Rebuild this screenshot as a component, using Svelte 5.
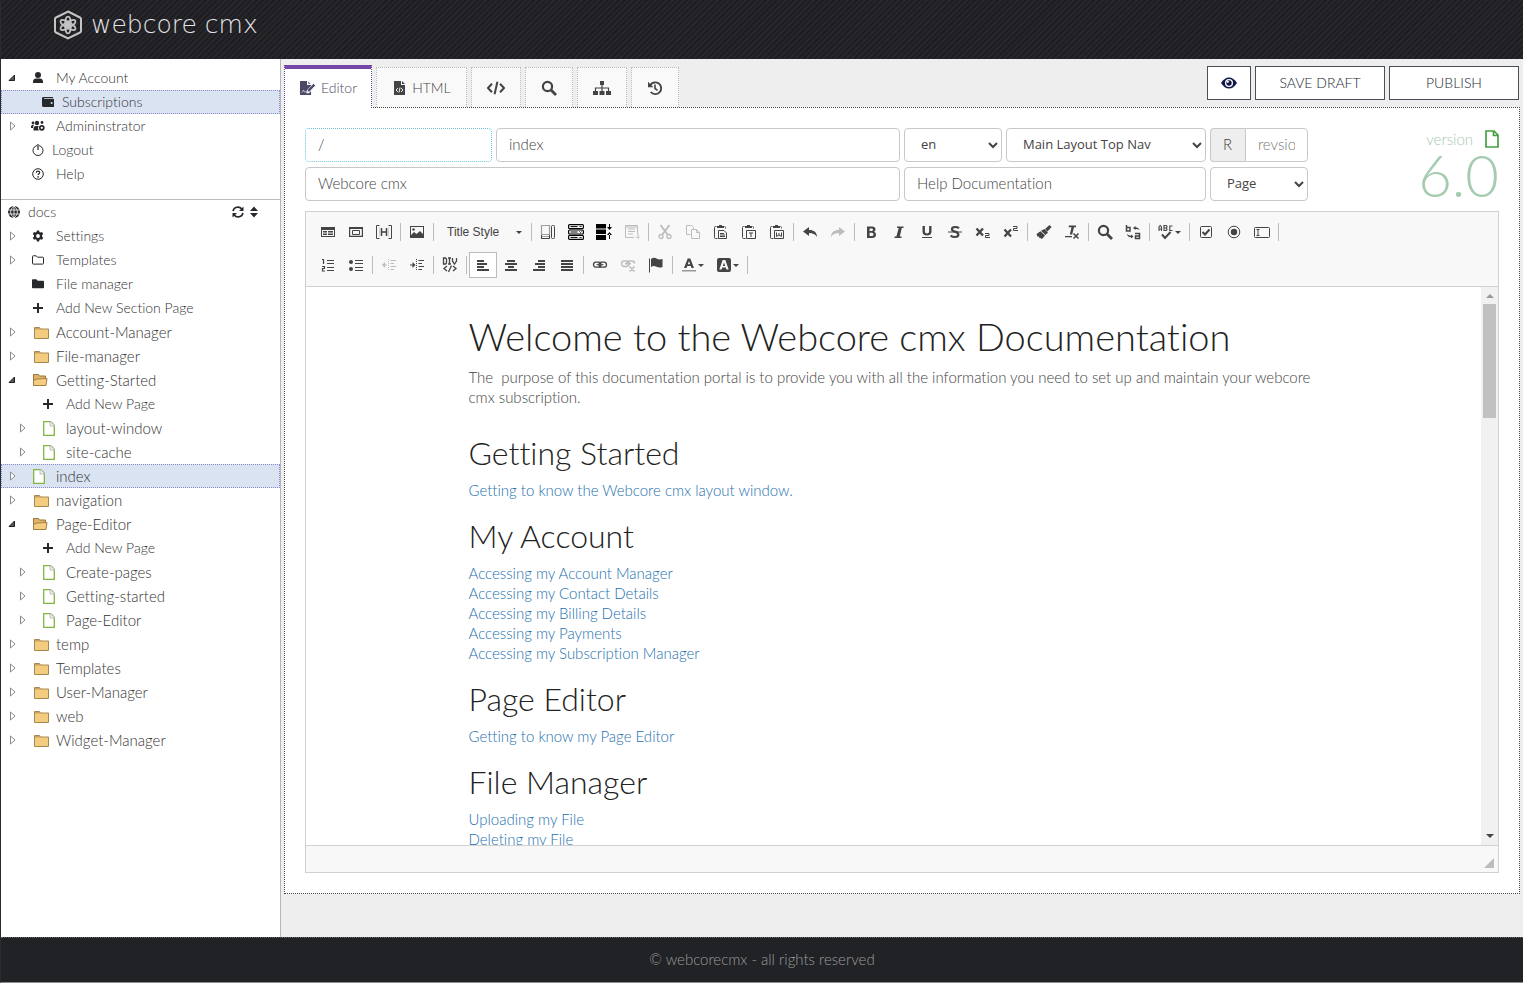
<script>
  const icons = {
    user: '<circle cx="10" cy="5" r="3"/><path d="M5 13v-1.500C5 9.500 6.500 8.500 8 8.500h4c1.500 0 3 1 3 3V13z"/>',
    wallet: '<path d="M5 3h10v1H6v.8h9.500q.5 0 .5.500v7.200q0 .5-.5.500H5.500Q4 13 4 11.500v-7Q4 3 5 3z"/><circle cx="13.600" cy="9" r="1" fill="#d9e3f2"/>',
    users: '<circle cx="9" cy="5" r="2.200"/><circle cx="5" cy="5" r="1.400"/><circle cx="14" cy="4.500" r="1.400"/><path d="M3 10V8.500Q3 7 4.500 7H6q-1 1-1 3zM5.500 12.500V11Q5.500 8 8 8h2.500L10 10.500l1 2z"/><circle cx="13.800" cy="9.800" r="2" fill="none" stroke="currentColor" stroke-width="1.700"/>',
    power: '<circle cx="10" cy="8.500" r="5" fill="none" stroke="currentColor"/><path d="M9 2h2v7H9z" fill="#fff"/><path d="M9.400 2h1.200v6H9.400z"/>',
    help: '<circle cx="10" cy="8" r="5.300" fill="none" stroke="currentColor"/><path d="M8.300 6.700C8.300 4.600 11.800 4.700 11.700 6.700 11.600 7.800 10.100 7.900 10.100 9.100" fill="none" stroke="currentColor" stroke-width="1.200"/><circle cx="10.100" cy="10.900" r=".8"/>',
    globe: '<circle cx="10" cy="8" r="6"/><path d="M4 6h12M4 10h12M10 2v12M10 2C5.500 6 5.500 10 10 14M10 2c4.500 4 4.500 8 0 12" fill="none" stroke="#fff" stroke-width=".8"/>',
    gear: '<path d="M8.900 2.500h2.200l.4 1.500 1 .6 1.500-.5 1.200 2-1.200 1.100v1.400l1.200 1.100-1.200 2-1.500-.5-1 .6-.4 1.600H8.900l-.4-1.600-1-.6-1.500.5-1.200-2L6 8.600V7.200L4.800 6.100l1.200-2 1.500.5 1-.6z"/><circle cx="10" cy="8" r="1.900" fill="#fff"/>',
    folderLine: '<path d="M4.500 4.500q0-.7.700-.7h3l1.300 1.400h5.200q.8 0 .8.800v5.300q0 .8-.8.800H5.300q-.8 0-.8-.8z" fill="none" stroke="currentColor"/>',
    folderSolid: '<path d="M4 4q0-.8.800-.8h3.500L9.700 4.700h5.500q.8 0 .8.800v6q0 .8-.8.800H4.800q-.8 0-.8-.8z"/>',
    plus: '<path d="M9 3h2v4h4v2h-4v4H9V9H5V7h4z"/>',
    folder: '<path d="M6.500 4V3.500h5l1 1.500H20.500v9.500h-14z" fill="#f4cc7f" stroke="#a98850"/><path d="M7 4h4.500l1 1.500H7z" fill="#c9a35f"/>',
    folderOpen: '<path d="M5.500 13.500v-11h5l1 1.500h6v3" fill="#e0b366" stroke="#96723a"/><path d="M5.500 13.500V8.500L9 7l10 -.5-1 7z" fill="#f6cd80" stroke="#a47e43"/>',
    page: '<path d="M5.700 1.700h7l3.600 3.600v10H5.700z" fill="#fff" stroke="#7fb741" stroke-width="1.300"/><path d="M12 1l5 5h-5z" fill="#eee" stroke="#aaa" stroke-width=".7"/>',
    editor: '<path d="M1 1h7v4h4v1.500L7.500 11v2.200H10L12 11v4H1z"/><path d="M9 1l3 3H9zM14.500 3.500L16.500 5.500 10.500 11.800H8.500V9.800zM3 12.500l1.500-2.500 1 2h2" stroke="#fff" stroke-width=".6"/>',
    htmlFile: '<path d="M2 1h7v4h4v10H2z"/><path d="M10 1l3 3h-3z"/><path d="M6 8l-2 2 2 2M9 8l2 2-2 2M8 7.500l-1 5" fill="none" stroke="#fff" stroke-width=".9"/>',
    code: '<path d="M5 3.800L1 8l4 4.200M13 3.800L17 8l-4 4.200M10.400 1.800L7.600 14.200" fill="none" stroke="currentColor" stroke-width="2"/>',
    search: '<circle cx="6.500" cy="6.500" r="4.600" fill="none" stroke="currentColor" stroke-width="2.200"/><path d="M10 10l5 5" stroke="currentColor" stroke-width="2.800"/>',
    sitemap: '<path d="M7 1h4v4H7zM0 11h5v4H0zM6.500 11h5v4h-5zM13 11h5v4h-5z"/><path d="M9 5v6M2.500 11V8h13v3" fill="none" stroke="currentColor" stroke-width="1.200"/>',
    history: '<path d="M3.200 5.200A5.900 5.900 0 1 1 3.700 12" fill="none" stroke="currentColor" stroke-width="1.900"/><path d="M1 1.800v5.400h5.400z"/><path d="M8 4.500V8.500l2.500 1.800" fill="none" stroke="currentColor" stroke-width="1.600"/>',
    eye: '<path d="M1 8Q4.500 2.500 9 2.500T17 8Q13.500 13.500 9 13.500T1 8z"/><circle cx="9" cy="8" r="4" fill="#fff"/><circle cx="9" cy="8" r="2.700"/><circle cx="7.800" cy="6.800" r="1.100" fill="#fff"/>',
    form: '<path d="M1 3h14v10H1zm1 3v6h12V6z" fill-rule="evenodd"/><path d="M3 7h4v1.500H3zM8 7h5v1.500H8zM3 9.500h4V11H3zM8 9.500h5V11H8z"/>',
    iframe: '<path d="M1 3h14v10H1zm1.200 2v6.800h11.600V5z" fill-rule="evenodd"/><path d="M4.500 6.500h7v4h-7z" fill="none" stroke="currentColor"/>',
    hidden: '<path d="M3.500 1.500h-3v13h3M12.500 1.500h3v13h-3" fill="none" stroke="currentColor"/><path d="M5.500 4v8M10.500 4v8M5.500 8h5" fill="none" stroke="currentColor" stroke-width="1.500"/><path d="M3.500 3v10M12.500 3v10" stroke="#bbb" stroke-width=".6"/>',
    image: '<path d="M1 2h14v12H1zm1 1v8l3-3 2.500 2L11 7l3 3V3z" fill-rule="evenodd"/><circle cx="4.500" cy="5.500" r="1.200"/>',
    layout: '<path d="M1.500 1.500h8v9h-8zM1.500 12.500h8v2h-8z" fill="none" stroke="currentColor" stroke-width="1.200" stroke-dasharray="1 1"/><path d="M1.500 11v3.500h8V11" fill="none" stroke="currentColor"/><rect x="11.500" y="1.500" width="3" height="13" rx="1" fill="none" stroke="currentColor"/>',
    rows: '<rect x=".6" y=".6" width="14.800" height="4" rx="1" fill="#fff" stroke="#000" stroke-width="1.200"/><rect x=".6" y="6" width="14.800" height="4" rx="1" fill="#fff" stroke="#000" stroke-width="1.200"/><rect x=".6" y="11.400" width="14.800" height="4" rx="1" fill="#fff" stroke="#000" stroke-width="1.200"/><path d="M2.500 2.600h7M2.500 8h7M2.500 13.400h7M11.500 2l1 1 1-1M11.500 7.500l1 1 1-1M11.500 13l1 1 1-1" fill="none" stroke="#000"/>',
    rowHeight: '<path d="M0 0h10v4.500H0zM0 5.500h10V10H0zM0 11h10v5H0zM11 3h5l-2.500 3zM11 11h5l-2.500-3zM13 0h1v4h-1zM13 10h1v5h-1z" fill="#000"/>',
    template: '<path d="M10 13.500H1.500v-12h12V9M4 5h7M4 7.500h7M4 10h5M1.500 3h12" fill="none" stroke="currentColor"/><path d="M14 9v5M12 12.500l2 2 2-2" fill="none" stroke="currentColor"/>',
    cut: '<path d="M3.500 1l7.500 10M12.500 1L5 11" stroke="currentColor" stroke-width="1.800"/><circle cx="4" cy="12.500" r="2" fill="none" stroke="currentColor" stroke-width="1.300"/><circle cx="12" cy="12.500" r="2" fill="none" stroke="currentColor" stroke-width="1.300"/>',
    copy: '<path d="M5.500 10.500h-4v-9h5l2 2v2M6.500 5.500h5l3 3v6h-8zM11.500 5.500v3h3" fill="none" stroke="currentColor"/>',
    paste: '<path d="M4.500 14.500h-2q-1 0-1-1v-10q0-1 1-1h1M11.500 2.500q1 0 1 1v1M5.500 6.500h5.500l2.500 2.500v5.500h-8zM7 9.500h4M7 11h5M7 12.500h5" fill="none" stroke="currentColor"/><path d="M4 2h2V1h3v1h2v2H4z"/>',
    pasteText: '<path d="M4.500 14.500h-2q-1 0-1-1v-10q0-1 1-1h1M11.500 2.500q1 0 1 1v1M5.500 6.500h9v8h-9zM8 9h4M10 9v4" fill="none" stroke="currentColor"/><path d="M4 2h2V1h3v1h2v2H4z"/>',
    pasteWord: '<path d="M4.500 14.500h-2q-1 0-1-1v-10q0-1 1-1h1M11.500 2.500q1 0 1 1v1M5.500 6.500h9v8h-9zM7.500 8.500v4l2.500-1.500 2.500 1.500v-4M10 9v2" fill="none" stroke="currentColor"/><path d="M4 2h2V1h3v1h2v2H4z"/>',
    undo: '<path d="M1 7.500L7 3v3c5 0 8 2.500 8 7-2-3-4-4-8-4v3z"/>',
    redo: '<path d="M15 7.500L9 3v3C4 6 1 8.500 1 13c2-3 4-4 8-4v3z"/>',
    bold: '<path d="M4 2.500h5q3.500 0 3.500 3 0 1.600-1.400 2.300Q13 8.500 13 10.500 13 14 9 14H4zm2.600 2v2.500h1.900q1.500 0 1.500-1.300T8.500 4.500zm0 4.300V12h2.200q1.700 0 1.700-1.600T8.800 8.800z" fill-rule="evenodd"/>',
    italic: '<path d="M6 2.500h6.500v1.500h-1.700L8.800 12.500h1.700V14H3.500v-1.500h1.900L7.700 4H6z"/>',
    underline: '<path d="M3.500 2v5.500q0 4 4.500 4t4.500-4V2h-2.400v5.500q0 2-2.100 2t-2.100-2V2zM3 13h10v1H3z"/>',
    strike: '<path d="M12 4.200Q10.500 3 8 3 5 3 5 5.200 5 7 8 7.600t3.400 3Q11.400 13 8 13 5.500 13 3.600 11.600" fill="none" stroke="currentColor" stroke-width="2.200"/><path d="M1 7.500h14v1H1z"/>',
    sub: '<path d="M1.500 4.500l6.500 7M8 4.500l-6.500 7" stroke="currentColor" stroke-width="2.300"/><path d="M10 9.500h4v2h-3.500v2H15" fill="none" stroke="currentColor"/>',
    sup: '<path d="M1.500 5.500l6.500 7M8 5.500l-6.500 7" stroke="currentColor" stroke-width="2.300"/><path d="M10 2.500h4v2h-3.500v2H15" fill="none" stroke="currentColor"/>',
    brush: '<path d="M13.500 1l2 2-4 4.500L9 5z"/><path d="M8.500 5l3.500 3.500L9.500 11 5 6.800zM4.500 7.300l4.500 4.200L6 15l-1.500-1-1 .2L3 12.500l-1.500.3L.500 10z"/>',
    clear: '<path d="M5 1.500h7v1.700H10L8.200 10.500h-2.400L7.500 3.200H4.500zM1 12h7v1.300H1z"/><path d="M9.500 9.500l5 5M14.500 9.500l-5 5" stroke="currentColor" stroke-width="1.500"/>',
    replace: '<path d="M1.500 1v6h3.500V3.500H1.500M10 9.500h4.500v5H10.500v-2.500h4" fill="none" stroke="currentColor" stroke-width="1.500"/><path d="M8 4l2.500-2v1.200q3 0 4 3-2-1.500-4-1.300V6zM8.500 12.500L6 10.500v1.200q-2.500 0-4-2 .5 3.500 4 3.500v1.300z"/>',
    spell: '<path d="M1 7V3L2.200 1.500 3.500 3V7M1 5h2.500M6 7V1.500h2.300l.8 1-.8 1.500.8 1.500L8.300 6.500H6M6 4h2M14.500 2h-2.700v4.500h2.700" fill="none" stroke="currentColor" stroke-width="1.100"/><path d="M4 10.500l3 3.500 5.500-6" fill="none" stroke="currentColor" stroke-width="2"/>',
    checkbox: '<rect x="2.500" y="2.500" width="11" height="11" rx="1" fill="none" stroke="currentColor"/><path d="M4.500 8l2.500 2.500L11.500 5.500" fill="none" stroke="currentColor" stroke-width="2"/>',
    radio: '<circle cx="8" cy="8" r="5.800" fill="none" stroke="currentColor"/><circle cx="8" cy="8" r="3.200"/>',
    textfield: '<rect x=".5" y="3.500" width="15" height="10" rx="1" fill="none" stroke="currentColor"/><path d="M2.500 5.500h3M4 5.500v6M2.500 11.500h3" stroke="currentColor"/>',
    ol: '<path d="M2 2.500h1.500V7M2 9.500h2.500v2H2.500v2.500h2.500M7 3.500h7M7 6.500h7M7 10.500h7M7 13.500h7" fill="none" stroke="currentColor" stroke-width="1.200"/>',
    ul: '<circle cx="3" cy="5" r="2"/><circle cx="3" cy="12" r="2"/><path d="M7 3.500h8M7 6.500h8M7 10.500h8M7 13.500h8" stroke="currentColor" stroke-width="1.200"/>',
    outdent: '<path d="M7.500 2v12" stroke="currentColor" stroke-dasharray="1 1"/><path d="M9.500 3.500H15M9.500 6.500H13M9.500 9.500H15M9.500 12.500H13M2 8h4" stroke="currentColor" stroke-width="1.200"/><path d="M1 8l3-3v6z"/>',
    indent: '<path d="M7.500 2v12" stroke="currentColor" stroke-dasharray="1 1"/><path d="M9.500 3.500H15M9.500 6.500H13M9.500 9.500H15M9.500 12.500H13M1 8h4" stroke="currentColor" stroke-width="1.200"/><path d="M6.500 8l-3-3v6z"/>',
    div: '<path d="M1.500 1v6h2l1-1V2l-1-1zM6 1h3M7.500 1v6M6 7h3M10.500 1v3L12.500 7l2-3V1M5 9l-3 2.500L5 14M11 9l3 2.500-3 2.500M9.500 8.500l-3 6.500" fill="none" stroke="currentColor" stroke-width="1.300"/>',
    left: '<path d="M2 3h7v2H2zM2 6h10v2H2zM2 9h7v2H2zM2 12h12v2H2z"/>',
    center: '<path d="M4 3h8v2H4zM2 6h12v2H2zM5 9h6v2H5zM2 12h12v2H2z"/>',
    right: '<path d="M7 3h7v2H7zM4 6h10v2H4zM7 9h7v2H7zM2 12h12v2H2z"/>',
    justify: '<path d="M2 3h12v2H2zM2 6h12v2H2zM2 9h12v2H2zM2 12h12v2H2z"/>',
    link: '<rect x="1.500" y="5.200" width="7.500" height="5" rx="2.500" fill="none" stroke="currentColor" stroke-width="1.300"/><rect x="7" y="5.200" width="7.500" height="5" rx="2.500" fill="none" stroke="currentColor" stroke-width="1.300"/><path d="M4.500 7.700h7" stroke="currentColor"/>',
    unlink: '<rect x="1.500" y="4" width="7.500" height="5.500" rx="2.700" fill="none" stroke="currentColor" stroke-width="1.300"/><path d="M7 7V6q0-2 2.500-2H12q2.500 0 2.500 2.500M5 6.700h6M9.500 9.500l5 5M14.500 9.500l-5 5" fill="none" stroke="currentColor" stroke-width="1.500"/>',
    flag: '<path d="M1 1.500h1v14H1zM3 2q3-2 5.500-.5T14.500 2v8q-3 1.200-6-.3T3 10z"/>',
    textColor: '<path d="M6.700 1.500h2.600L13 11h-2.500l-.7-2H6.200l-.7 2H3zM8 4L6.800 7.300h2.400z" fill-rule="evenodd"/><path d="M1 13h14v1.500H1z" fill="#999"/>',
    bgColor: '<path d="M3 1h10q2 0 2 2v10q0 2-2 2H3q-2 0-2-2V3q0-2 2-2zm3.700 2L3.300 12.500h2.200l.7-2h3.600l.7 2h2.200L9.300 3zM8 5.500l1.200 3.500H6.800z" fill-rule="evenodd"/>'
  };

  const account = [
    { label: 'My Account', icon: 'user', caret: 'open' },
    { label: 'Subscriptions', icon: 'wallet', level: 1, tight: true, selected: true },
    { label: 'Admininstrator', icon: 'users', caret: 'closed' },
    { label: 'Logout', icon: 'power', tight: true },
    { label: 'Help', icon: 'help' }
  ];
  const site = [
    { label: 'Settings', icon: 'gear', caret: 'closed' },
    { label: 'Templates', icon: 'folderLine', caret: 'closed' },
    { label: 'File manager', icon: 'folderSolid' },
    { label: 'Add New Section Page', icon: 'plus' },
    { label: 'Account-Manager', icon: 'folder', caret: 'closed' },
    { label: 'File-manager', icon: 'folder', caret: 'closed' },
    { label: 'Getting-Started', icon: 'folderOpen', caret: 'open' },
    { label: 'Add New Page', icon: 'plus', level: 1 },
    { label: 'layout-window', icon: 'page', caret: 'closed', level: 1 },
    { label: 'site-cache', icon: 'page', caret: 'closed', level: 1 },
    { label: 'index', icon: 'page', caret: 'closed', selected: true },
    { label: 'navigation', icon: 'folder', caret: 'closed' },
    { label: 'Page-Editor', icon: 'folderOpen', caret: 'open' },
    { label: 'Add New Page', icon: 'plus', level: 1 },
    { label: 'Create-pages', icon: 'page', caret: 'closed', level: 1 },
    { label: 'Getting-started', icon: 'page', caret: 'closed', level: 1 },
    { label: 'Page-Editor', icon: 'page', caret: 'closed', level: 1 },
    { label: 'temp', icon: 'folder', caret: 'closed' },
    { label: 'Templates', icon: 'folder', caret: 'closed' },
    { label: 'User-Manager', icon: 'folder', caret: 'closed' },
    { label: 'web', icon: 'folder', caret: 'closed' },
    { label: 'Widget-Manager', icon: 'folder', caret: 'closed' }
  ];
  const contentIcons = ['folder', 'folderOpen', 'page'];
  const tabs = [
    { icon: 'editor', label: 'Editor', width: 16 },
    { icon: 'htmlFile', label: 'HTML', width: 14 },
    { icon: 'code', name: 'Code', width: 18 },
    { icon: 'search', name: 'Search', width: 16 },
    { icon: 'sitemap', name: 'Sitemap', width: 18 },
    { icon: 'history', name: 'History', width: 16 }
  ];
  const disabled = ['template', 'cut', 'copy', 'redo', 'outdent', 'unlink'];
  const dropdowns = ['spell', 'textColor', 'bgColor'];
  const toolbar = [
    'form iframe hidden | image | combo | layout rows rowHeight template | cut copy paste pasteText pasteWord | undo redo | bold italic underline strike sub sup | brush clear | search replace | spell | checkbox radio textfield |',
    'ol ul | outdent indent | div | left center right justify | link unlink flag | textColor bgColor |'
  ].map((row) => row.split(' '));

  const sections = [
    { title: 'Getting Started', links: ['Getting to know the Webcore cmx layout window.'] },
    {
      title: 'My Account',
      links: [
        'Accessing my Account Manager',
        'Accessing my Contact Details',
        'Accessing my Billing Details',
        'Accessing my Payments',
        'Accessing my Subscription Manager'
      ]
    },
    { title: 'Page Editor', links: ['Getting to know my Page Editor'] },
    { title: 'File Manager', links: ['Uploading my File', 'Deleting my File'] }
  ];

  let activeTab = $state(0);
</script>

{#snippet icon(name, width = 16)}
  <svg {width} height="16" viewBox="0 0 {width} 16" fill="currentColor" aria-hidden="true">{@html icons[name]}</svg>
{/snippet}

{#snippet tree(items)}
  <ul class="tree">
    {#each items as item}
      <li>
        <a
          href="#top"
          class="node"
          class:nested={item.level}
          class:selected={item.selected}
          class:tight={item.tight}
          class:content={contentIcons.includes(item.icon)}
        >
          <span class="caret">
            {#if item.caret === 'open'}
              <svg width="8" height="8" viewBox="0 0 8 8"><path d="M6.500 1v5.500H1z" fill="#555" stroke="#222" /></svg>
            {:else if item.caret === 'closed'}
              <svg width="8" height="10" viewBox="0 0 8 10"><path d="M2.500 1v8L7 5z" fill="#fff" stroke="#8c8c8c" /></svg>
            {/if}
          </span>
          {@render icon(item.icon, 22)}
          <span class="label">{item.label}</span>
        </a>
      </li>
    {/each}
  </ul>
{/snippet}

<div class="page" id="top">
  <header>
    <svg class="logo" width="30" height="30" viewBox="0 0 30 30" fill="none" stroke="#c4c4c6">
      <path d="M15 1.500l12 6q1 .5 1 1.500v12q0 1-1 1.500l-12 6-12-6Q2 22 2 21V9q0-1 1-1.500z" stroke-width="2" />
      <ellipse cx="15" cy="15" rx="3" ry="8.500" stroke-width="1.600" />
      <ellipse cx="15" cy="15" rx="3" ry="8.500" stroke-width="1.600" transform="rotate(60 15 15)" />
      <ellipse cx="15" cy="15" rx="3" ry="8.500" stroke-width="1.600" transform="rotate(120 15 15)" />
      <circle cx="15" cy="15" r="2.500" fill="#c4c4c6" />
    </svg>
    <span class="brand">webcore cmx</span>
  </header>

  <div class="body">
    <aside>
      <nav class="account" aria-label="Account">{@render tree(account)}</nav>
      <nav aria-label="Site">
        <div class="site-head">
          {@render icon('globe', 20)}
          <span class="site-name">docs</span>
          <button aria-label="Refresh">
            <svg width="12" height="12" viewBox="0 0 12 12" fill="none" stroke="currentColor" stroke-width="1.600">
              <path d="M1 5a5 5 0 0 1 8.800-2M11 7a5 5 0 0 1-8.800 2" />
              <path d="M11.500.500V5H7zM.500 11.500V7H5z" fill="currentColor" stroke="none" />
            </svg>
          </button>
          <button aria-label="Sort">
            <svg width="8" height="12" viewBox="0 0 8 12" fill="currentColor"><path d="M4 .500L8 5H0zM4 11.500L8 7H0z" /></svg>
          </button>
        </div>
        {@render tree(site)}
      </nav>
    </aside>

    <main>
      <div class="bar">
        <div class="tabs" role="tablist">
          {#each tabs as tab, i}
            <button role="tab" class="tab" class:active={activeTab === i} aria-selected={activeTab === i} aria-label={tab.label ?? tab.name} onclick={() => (activeTab = i)}>
              {@render icon(tab.icon, tab.width)}
              {#if tab.label}<span>{tab.label}</span>{/if}
            </button>
          {/each}
        </div>
        <div class="actions">
          <button class="action eye" aria-label="Preview">{@render icon('eye', 18)}</button>
          <button class="action">SAVE DRAFT</button>
          <button class="action">PUBLISH</button>
        </div>
      </div>

      <section class="panel">
        <div class="meta">
          <form>
            <input class="path" aria-label="Path" value="/" />
            <input aria-label="Page name" value="index" />
            <select aria-label="Language"><option>en</option></select>
            <select aria-label="Layout"><option>Main Layout Top Nav</option></select>
            <div class="group">
              <label for="revision">R</label>
              <input id="revision" placeholder="revsio" />
            </div>
            <input class="wide" aria-label="Title" value="Webcore cmx" />
            <input class="wide" aria-label="Description" value="Help Documentation" />
            <select aria-label="Type"><option>Page</option></select>
          </form>
          <div class="version">
            <div class="version-top">
              <span>version</span>
              <svg width="14" height="18" viewBox="0 0 14 18" fill="none" stroke="#45a045" stroke-width="1.700">
                <path d="M1 1h8l4 4v12H1zM8.500 1v4.500H13" />
              </svg>
            </div>
            <strong>6.0</strong>
          </div>
        </div>

        <div class="editor">
          <div class="toolbar">
            {#each toolbar as row}
              <div class="tools">
                {#each row as tool}
                  {#if tool === '|'}
                    <span class="sep"></span>
                  {:else if tool === 'combo'}
                    <button class="combo">Title Style <span class="arrow"></span></button>
                  {:else}
                    <button class="tool" class:off={disabled.includes(tool)} class:on={tool === 'left'} aria-label={tool}>
                      {@render icon(tool)}
                      {#if dropdowns.includes(tool)}<span class="arrow"></span>{/if}
                    </button>
                  {/if}
                {/each}
              </div>
            {/each}
          </div>
          <div class="canvas">
            <div class="scroll">
              <article>
                <h1>Welcome to the Webcore cmx Documentation</h1>
                <p>The&nbsp; purpose of this documentation portal is to provide you with all the information you need to set up and maintain your webcore cmx subscription.</p>
                {#each sections as section}
                  <h2>{section.title}</h2>
                  {#each section.links as link}
                    <div><a href="#top">{link}</a></div>
                  {/each}
                {/each}
              </article>
            </div>
            <div class="scrollbar">
              <span class="up"></span>
              <span class="thumb"></span>
              <span class="down"></span>
            </div>
          </div>
          <div class="status"><span class="grip"></span></div>
        </div>
      </section>
    </main>
  </div>

  <footer>© webcorecmx - all rights reserved</footer>
</div>

<style>
  .page {
    box-sizing: border-box;
    display: flex;
    flex-direction: column;
    height: 100vh;
    border-left: 1px solid #2b2b33;
    border-bottom: 1px solid #8d8d90;
    background: #eee;
    color: #444;
    font: 300 15px/20px Lato, sans-serif;
    font-variant-ligatures: none;
  }
  .page :global(*) {
    box-sizing: border-box;
  }
  svg {
    flex: none;
    display: block;
  }
  button {
    font: inherit;
    font-size: 14px;
    color: inherit;
    margin: 0;
    padding: 0;
    border: 0;
    background: none;
  }
  a {
    color: #2470ae;
    text-decoration: none;
  }
  header {
    flex: none;
    display: flex;
    align-items: center;
    gap: 8px;
    height: 59px;
    padding: 0 52px 9px;
    background: repeating-linear-gradient(135deg, #1d1d22 0 2px, #26262b 2px 4px);
  }
  .brand {
    color: #e4e4e6;
    font: 200 25px/30px "DejaVu Sans", sans-serif;
  }
  .body {
    flex: 1;
    display: flex;
    min-height: 0;
  }
  aside {
    flex: none;
    width: 280px;
    overflow: hidden;
    border-right: 1px solid #b5b5bd;
    background: #fff;
  }
  .account {
    padding: 7px 0 13px;
    border-bottom: 1px solid #bbb;
  }
  .tree {
    margin: 0;
    padding: 0;
    list-style: none;
  }
  .node {
    display: flex;
    align-items: center;
    height: 24px;
    padding-left: 6px;
    border: 1px solid transparent;
    color: #26282c;
    font-size: 14px;
  }
  .content {
    font-size: 15px;
  }
  .nested {
    padding-left: 16px;
  }
  .selected {
    border: 1px dotted #8c8cc8;
    background: #d9e3f2;
  }
  .caret {
    width: 20px;
  }
  .label {
    margin-left: 6px;
    color: #333;
  }
  .tight .label {
    margin-left: 2px;
  }
  .site-head {
    display: flex;
    align-items: center;
    height: 24px;
    padding: 0 22px 0 3px;
    color: #26282c;
    font-size: 14px;
  }
  .site-name {
    flex: 1;
    margin-left: 4px;
    color: #333;
  }
  .site-head button {
    margin-left: 6px;
  }
  main {
    flex: 1;
    display: flex;
    flex-direction: column;
    min-width: 0;
    padding: 0 3px 43px;
  }
  .bar {
    flex: none;
    display: flex;
    justify-content: space-between;
    height: 48px;
  }
  .tabs {
    display: flex;
    align-items: flex-end;
    gap: 4px;
  }
  .tab {
    display: flex;
    align-items: center;
    gap: 6px;
    height: 40px;
    padding: 0 15px;
    border: 1px dotted #bbb;
    border-bottom: 0;
    background: #f9f9f9;
    color: #444;
  }
  .tab.active {
    z-index: 1;
    height: 43px;
    margin-bottom: -1px;
    padding: 0 14px 2px;
    border-color: #6a4a9c;
    border-top: 4px solid #7548a8;
    background: #fff;
    color: #4a4a68;
  }
  .actions {
    display: flex;
    gap: 4px;
    padding: 7px 1px 0 0;
  }
  .action {
    width: 130px;
    height: 34px;
    border: 1px solid #4a5058;
    background: #fff;
    color: #181e34;
  }
  .eye {
    display: grid;
    place-items: center;
    width: 44px;
    color: #10184a;
  }
  .panel {
    flex: 1;
    display: flex;
    flex-direction: column;
    gap: 10px;
    min-height: 0;
    padding: 20px;
    border: 1px dotted #444;
    background: #fff;
  }
  .meta {
    display: flex;
    justify-content: space-between;
  }
  form {
    display: grid;
    grid-template-columns: 187fr 404fr 98fr 200fr 98fr;
    gap: 5px 4px;
    width: 84%;
  }
  input,
  select {
    width: 100%;
    min-width: 0;
    height: 34px;
    padding: 5px 12px 7px;
    border: 1px solid #c8c8c8;
    border-radius: 4px;
    background: #fff;
    color: #444;
    font: inherit;
    font-variant-ligatures: none;
  }
  select {
    font: 400 13px/20px "Open Sans", sans-serif;
  }
  .path {
    border: 1px dotted #6cc8e0;
  }
  .wide {
    grid-column: span 2;
  }
  .group {
    display: flex;
  }
  .group label {
    flex: none;
    width: 35px;
    padding: 5px 12px 7px;
    border: 1px solid #c8c8c8;
    border-right: 0;
    border-radius: 4px 0 0 4px;
    background: #eee;
  }
  .group input {
    border-radius: 0 4px 4px 0;
  }
  ::placeholder {
    color: #777;
  }
  .version {
    color: #a6cbb0;
  }
  .version-top {
    display: flex;
    align-items: center;
    justify-content: flex-end;
    gap: 12px;
    height: 22px;
  }
  .version strong {
    display: block;
    font-size: 58px;
    font-weight: 300;
    line-height: 50px;
  }
  .editor {
    flex: 1;
    display: flex;
    flex-direction: column;
    min-height: 0;
    border: 1px solid #d1d1d1;
  }
  .toolbar {
    flex: none;
    display: flex;
    flex-direction: column;
    gap: 7px;
    padding: 7px 8px 8px;
    border-bottom: 1px solid #d1d1d1;
    background: #f8f8f8;
  }
  .tools {
    display: flex;
    align-items: center;
    height: 26px;
  }
  .tool {
    display: flex;
    align-items: center;
    gap: 1px;
    height: 26px;
    padding: 0 6px;
    color: #444;
  }
  .tool.off {
    color: #bcbcbc;
  }
  .tool.on {
    padding: 0 5px;
    border: 1px solid #bcbcbc;
    background: #fff;
  }
  .combo {
    display: flex;
    align-items: center;
    justify-content: space-between;
    width: 93px;
    padding: 0 7px 0 11px;
    color: #444;
    font: 12px/26px "Liberation Sans", sans-serif;
  }
  .arrow {
    border: 3px solid transparent;
    border-top-color: #444;
    border-bottom: 0;
  }
  .sep {
    width: 1px;
    height: 18px;
    margin: 0 2px;
    background: #bcbcbc;
  }
  .canvas {
    flex: 1;
    display: flex;
    min-height: 0;
  }
  .scroll {
    flex: 1;
    overflow: hidden;
  }
  article {
    max-width: 850px;
    margin: 0 auto;
    padding-top: 30px;
  }
  h1,
  h2 {
    color: #222;
    font-weight: 300;
  }
  h1 {
    margin: 0 0 12px;
    font-size: 38px;
    line-height: 38px;
  }
  h2 {
    margin: 20px 0 12px;
    font-size: 32px;
    line-height: 31px;
  }
  p {
    margin: 0 0 30px;
  }
  .scrollbar {
    display: flex;
    flex-direction: column;
    width: 17px;
    padding: 7px 2px;
    background: #f1f1f1;
  }
  .up,
  .down {
    align-self: center;
    border: 4px solid transparent;
  }
  .up {
    border-top: 0;
    border-bottom-color: #999;
  }
  .down {
    margin-top: auto;
    border-bottom: 0;
    border-top-color: #444;
  }
  .thumb {
    height: 21%;
    margin-top: 6px;
    background: #c1c1c1;
  }
  .status {
    flex: none;
    display: flex;
    align-items: flex-end;
    justify-content: flex-end;
    height: 27px;
    padding: 4px;
    border-top: 1px solid #d1d1d1;
    background: #f8f8f8;
  }
  .grip {
    border: 5px solid #bcbcbc;
    border-top-color: transparent;
    border-left-color: transparent;
  }
  footer {
    flex: none;
    height: 45px;
    border-top: 1px dotted #666;
    background: #212226;
    color: #9c9c9c;
    line-height: 43px;
    text-align: center;
  }
</style>
